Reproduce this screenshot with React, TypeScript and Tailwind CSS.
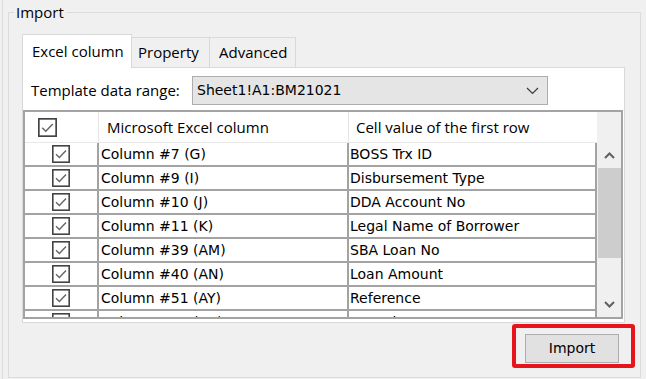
import React from 'react';

const rows: [string, string][] = [
  ['Column #7 (G)', 'BOSS Trx ID'],
  ['Column #9 (I)', 'Disbursement Type'],
  ['Column #10 (J)', 'DDA Account No'],
  ['Column #11 (K)', 'Legal Name of Borrower'],
  ['Column #39 (AM)', 'SBA Loan No'],
  ['Column #40 (AN)', 'Loan Amount'],
  ['Column #51 (AY)', 'Reference'],
  ['Column #63 (BK)', 'Row Size Status'],
];

const CheckBox = ({ size = 18 }: { size?: number }) => (
  <svg width={size} height={size} viewBox="0 0 18 18">
    <rect x="0.8" y="0.8" width="16.4" height="16.4" fill="white" stroke="#444" strokeWidth="1.6" />
    <path d="M4 9.2 L7.4 12.6 L14 5.6" fill="none" stroke="#666" strokeWidth="1.4" />
  </svg>
);

const Chevron = ({ up }: { up?: boolean }) => (
  <svg width="11" height="7" viewBox="0 0 11 7">
    <polyline
      points={up ? '1,6 5.5,1.5 10,6' : '1,1 5.5,5.5 10,1'}
      fill="none"
      stroke="#606060"
      strokeWidth="2"
    />
  </svg>
);

export default function App() {
  return (
    <div className="w-[646px] h-[379px] bg-[#f0f0f0] flex overflow-hidden font-['Open_Sans',sans-serif] text-[15px] text-black">
      <div className="w-[2px] shrink-0" />
      <div className="w-px shrink-0 bg-[#dadada]" />
      <div className="pl-[5px] pt-[12px]">
        {/* group box */}
        <div className="relative w-[633px] h-[366px] border border-[#dcdcdc] pl-[13px] pr-[15px] pt-[21px]">
          <span className="absolute left-[5px] -top-[11px] px-[2px] bg-[#f0f0f0] leading-[20px]">Import</span>

          {/* tabs */}
          <div className="relative z-10 flex items-end h-[33px]">
            <div className="h-[34px] -mb-px w-[110px] bg-white border border-b-0 border-[#d9d9d9] pl-[9px] flex items-center">
              Excel column
            </div>
            <div className="h-[30px] w-[78px] bg-[#f0f0f0] border border-l-0 border-b-0 border-[#d9d9d9] pl-[6px] flex items-center">
              Property
            </div>
            <div className="h-[30px] w-[86px] bg-[#f0f0f0] border border-l-0 border-b-0 border-[#d9d9d9] pl-[9px] flex items-center">
              Advanced
            </div>
          </div>

          {/* tab panel */}
          <div className="h-[256px] bg-white border border-[#d9d9d9] flex flex-col">
            <div className="flex items-center pt-[8px] pl-[8px]">
              <span className="w-[161px] shrink-0">Template data range:</span>
              <div className="w-[356px] h-[29px] bg-[#e5e5e5] border border-[#adadad] flex items-center justify-between pl-[4px] pr-[8px] font-['DejaVu_Sans',sans-serif] text-[14px]">
                <span>Sheet1!A1:BM21021</span>
                <svg width="13" height="8" viewBox="0 0 13 8">
                  <polyline points="1,1 6.5,6.5 12,1" fill="none" stroke="#3c3c3c" strokeWidth="1.2" />
                </svg>
              </div>
            </div>

            {/* grid */}
            <div className="mt-[5px] mr-[1px] h-[209px] border-2 border-[#a3a3a3] flex">
              <div className="w-[572px] overflow-hidden flex flex-col">
                <div className="h-[31px] shrink-0 flex bg-white border-b border-[#e8e8e8]">
                  <div className="w-[74px] border-r border-[#e5e5e5] pl-[13px] flex items-center">
                    <CheckBox size={19} />
                  </div>
                  <div className="w-[250px] border-r border-[#e5e5e5] pl-[8px] flex items-center">Microsoft Excel column</div>
                  <div className="w-[245px] pl-[7px] flex items-center">Cell value of the first row</div>
                </div>
                {rows.map(([col, val]) => (
                  <div key={col} className="h-[24px] shrink-0 flex border-b-2 border-[#a3a3a3] font-['DejaVu_Sans',sans-serif] text-[14px] bg-white">
                    <div className="w-[74px] border-r-2 border-[#a3a3a3] flex items-center justify-center">
                      <CheckBox />
                    </div>
                    <div className="w-[250px] border-r-2 border-[#a3a3a3] pl-[2px] flex items-center whitespace-nowrap">{col}</div>
                    <div className="w-[248px] border-r-2 border-[#a3a3a3] pl-[1px] flex items-center whitespace-nowrap">{val}</div>
                  </div>
                ))}
              </div>
              {/* scrollbar */}
              <div className="w-[24px] bg-[#f0f0f0] flex flex-col">
                <div className="h-[31px] shrink-0" />
                <div className="h-[25px] shrink-0 flex items-center justify-center">
                  <Chevron up />
                </div>
                <div className="h-[90px] ml-[1px] bg-[#cdcdcd]" />
                <div className="flex-1" />
                <div className="h-[25px] shrink-0 flex items-center justify-center">
                  <Chevron />
                </div>
              </div>
            </div>
          </div>

          {/* bottom button */}
          <div className="flex justify-end pr-[6px] mt-[11px]">
            <div className="relative">
              <button className="w-[94px] h-[29px] bg-[#e1e1e1] border border-[#adadad] font-['DejaVu_Sans',sans-serif] text-[14px]">
                Import
              </button>
              <div className="absolute -left-[13px] -top-[10px] w-[123px] h-[44px] border-4 border-[#e8141c] rounded-[3px] pointer-events-none" />
            </div>
          </div>
        </div>
      </div>
    </div>
  );
}
